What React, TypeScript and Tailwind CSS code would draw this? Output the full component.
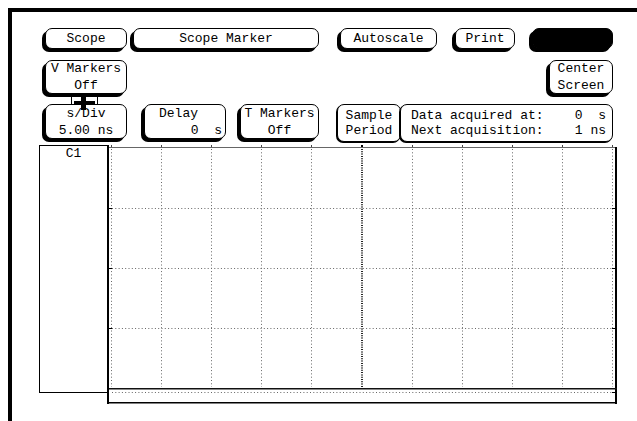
import type { ReactNode } from 'react'
import { clsx } from 'clsx'

const mono = "font-['Liberation_Mono','DejaVu_Sans_Mono',monospace]"

// raised softkey: thin outline with a heavy shadow to the lower left
function Key({ className, children, dark }: { className?: string; children?: ReactNode; dark?: boolean }) {
  return (
    <div
      className={clsx(
        'flex shrink-0 flex-col items-center justify-center rounded-[7px] border border-black shadow-[-3px_3px_0_0_#000] leading-[17px] whitespace-pre',
        dark ? 'bg-black' : 'bg-white',
        className,
      )}
    >
      {children}
    </div>
  )
}

// flat field, only a hairline shadow
function Field({ className, children }: { className?: string; children?: ReactNode }) {
  return (
    <div
      className={clsx(
        'flex shrink-0 flex-col justify-center rounded-[7px] border border-black bg-white shadow-[-1px_1px_0_0_#000] leading-[15px] whitespace-pre',
        className,
      )}
    >
      {children}
    </div>
  )
}

const cols = [4.5, 54.5, 104.5, 154.5, 204.5, 305.5, 355.5, 405.5, 455.5, 505.5]
const rows = [63.5, 123.5, 183.5]

function Graticule() {
  return (
    <svg width={510} height={259} className="block shrink-0">
      {/* frame */}
      <rect x={0} y={0} width={2} height={259} fill="#000" />
      <rect x={2} y={2} width={507} height={1} fill="#666" />
      <rect x={508} y={2} width={2} height={257} fill="#000" />
      <rect x={2} y={243} width={508} height={1.5} fill="#111" />
      <rect x={2} y={257} width={508} height={1.5} fill="#000" />

      {/* divisions */}
      {cols.map((x) => (
        <g key={x}>
          <line x1={x} y1={4} x2={x} y2={242} stroke="#666" strokeWidth={1} strokeDasharray="1 2.3" />
          <rect x={x - 0.5} y={0} width={1} height={2} fill="#444" />
        </g>
      ))}
      <line x1={255} y1={4} x2={255} y2={242} stroke="#222" strokeWidth={2} strokeDasharray="1 1.3" />
      <rect x={254} y={0} width={2} height={2} fill="#000" />

      {rows.map((y) => (
        <g key={y}>
          <line x1={5} y1={y} x2={507} y2={y} stroke="#666" strokeWidth={1} strokeDasharray="1 2.3" />
          <rect x={2} y={y - 0.5} width={3} height={1} fill="#000" />
          <rect x={505} y={y - 0.5} width={3} height={1} fill="#000" />
        </g>
      ))}
      <line x1={5} y1={247.5} x2={507} y2={247.5} stroke="#666" strokeWidth={1} strokeDasharray="1 2.3" />
      <rect x={505} y={247} width={3} height={1} fill="#000" />
    </svg>
  )
}

export default function App() {
  return (
    <div className="h-[421px] w-[637px] overflow-hidden bg-white pl-2 pt-2">
      <div className={clsx('h-full border-l-4 border-t-4 border-black pt-[16px] text-[13px] text-black', mono)}>
        {/* top softkeys */}
        <div className="flex h-[21px]">
          <Key className="ml-[33px] h-[21px] w-[82px]">Scope</Key>
          <Key className="ml-[6px] h-[21px] w-[186px]">Scope Marker</Key>
          <Key className="ml-[21px] h-[21px] w-[97px]">Autoscale</Key>
          <Key className="ml-[18px] h-[21px] w-[60px]">Print</Key>
          <Key dark className="ml-[17px] h-[21px] w-[81px]" />
        </div>

        <div className="mt-[11px] flex h-[34px]">
          <Key className="ml-[33px] h-[34px] w-[82px]">
            <span>V Markers</span>
            <span>Off</span>
          </Key>
          <Key className="ml-auto mr-[24px] h-[34px] w-[64px]">
            <span>Center</span>
            <span>Screen</span>
          </Key>
        </div>

        {/* link between V Markers and s/Div */}
        <div className="relative z-10 ml-[59px] h-[10px] w-[27px]">
          <svg width={27} height={10} className="overflow-visible">
            <line x1={0.5} y1={0} x2={0.5} y2={10} stroke="#000" />
            <line x1={26.5} y1={0} x2={26.5} y2={10} stroke="#000" />
            <rect x={3} y={7} width={21} height={4} fill="#000" />
            <rect x={10} y={3} width={5} height={13} fill="#000" />
          </svg>
        </div>

        <div className="flex h-[38px] items-start">
          <Key className="ml-[33px] h-[35px] w-[82px]">
            <span>s/Div</span>
            <span>5.00 ns</span>
          </Key>
          <Key className="ml-[17px] h-[35px] w-[82px] !items-stretch">
            <span className="pl-[14px]">Delay</span>
            <span className="pr-[3px] text-right">{'0  s'}</span>
          </Key>
          <Key className="ml-[14px] h-[35px] w-[79px]">
            <span>T Markers</span>
            <span>Off</span>
          </Key>
          <Field className="ml-[18px] h-[38px] w-[64px] items-center">
            <span>Sample</span>
            <span>Period</span>
          </Field>
          <Field className="-ml-px h-[38px] w-[213px] pl-[10px] pr-[6px]">
            <div className="flex justify-between">
              <span>Data acquired at:</span>
              <span>{'0  s'}</span>
            </div>
            <div className="flex justify-between">
              <span>Next acquisition:</span>
              <span>1 ns</span>
            </div>
          </Field>
        </div>

        {/* channel label + graticule */}
        <div className="mt-[3px] flex items-start">
          <div className="ml-[27px] h-[248px] w-[68px] shrink-0 border border-r-0 border-black text-center leading-[15px]">
            C1
          </div>
          <Graticule />
        </div>
      </div>
    </div>
  )
}
